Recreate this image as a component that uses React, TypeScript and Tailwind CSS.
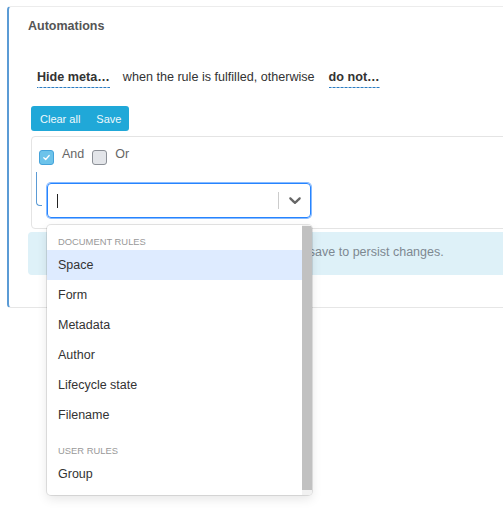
import React from 'react'

const documentRules = ['Space', 'Form', 'Metadata', 'Author', 'Lifecycle state', 'Filename']
const userRules = ['Group']

function Chevron() {
  return (
    <svg viewBox="0 0 20 20" width="20" height="20" className="fill-[#666]">
      <path d="M4.516 7.548c0.436-0.446 1.043-0.481 1.576 0l3.908 3.747 3.908-3.747c0.533-0.481 1.141-0.446 1.574 0 0.436 0.445 0.408 1.197 0 1.615-0.406 0.418-4.695 4.502-4.695 4.502-0.217 0.223-0.502 0.335-0.787 0.335s-0.57-0.112-0.789-0.335c0 0-4.287-4.084-4.695-4.502s-0.436-1.17 0-1.615z" />
    </svg>
  )
}

function Checkbox({ checked }: { checked: boolean }) {
  if (checked) {
    return (
      <span className="mt-[4px] flex h-[15px] w-[15px] shrink-0 items-center justify-center rounded-[3px] border border-[#45a3da] bg-[#6cc3ea]">
        <svg viewBox="0 0 10 10" width="9" height="9">
          <path d="M2 5.2 L4.1 7.2 L8 2.8" fill="none" stroke="#fff" strokeWidth="1.4" strokeLinecap="round" strokeLinejoin="round" />
        </svg>
      </span>
    )
  }
  return <span className="mt-[4px] h-[15px] w-[15px] shrink-0 rounded-[3px] border border-[#8c9097] bg-[#e3e5e9]" />
}

// underline used by the inline editable selects
const dashed =
  'inline-block pb-[3px] font-bold text-[#333] bg-[linear-gradient(to_right,#2b7cc2_3px,transparent_3px)] bg-[length:4px_1px] bg-repeat-x bg-bottom'

export default function App() {
  return (
    <div className="h-[513px] w-[503px] overflow-hidden bg-white pl-[7px] pt-[6px] font-['Liberation_Sans',Arial,sans-serif] text-[12.5px] leading-4 text-[#333]">
      <div className="w-[560px] rounded-[4px] border-t border-b border-l-2 border-t-[#ececec] border-b-[#e6e6e6] border-l-[#5b9bd5] pb-[32px] pl-[19px] pt-[11px]">
        <h2 className="font-bold text-[#555]">Automations</h2>

        {/* rule sentence */}
        <div className="mt-[35px] flex items-start pl-[9px] text-[12.6px]">
          <span className={dashed}>Hide meta…</span>
          <span className="ml-[13px]">when the rule is fulfilled, otherwise</span>
          <span className={`ml-[14px] ${dashed}`}>do not…</span>
        </div>

        <div className="ml-[3px] mt-[18px] flex h-[25px] w-fit items-center rounded-[3px] bg-[#20a8d8] text-[11px] text-[#eef8fc]">
          <button className="pl-[9px] pr-[8px]">Clear all</button>
          <button className="pl-[8px] pr-[8px]">Save</button>
        </div>

        {/* rule group */}
        <div className="ml-[3px] mt-[5px] rounded-[4px] border border-[#e4e4e4] pb-[10px] pt-[9px]">
          <div className="flex items-start pl-[7px]">
            <Checkbox checked />
            <span className="ml-[8px] text-[#666]">And</span>
            <span className="ml-[8px]" />
            <Checkbox checked={false} />
            <span className="ml-[8px] text-[#666]">Or</span>
          </div>

          <div className="mt-[7px] flex items-start pl-[4px]">
            <div className="h-[34px] w-[6px] rounded-bl-[4px] border-b border-l border-[#5b9bd5]" />
            <div className="relative ml-[5px] mt-[11px] flex h-[35px] w-[264px] rounded-[4px] border border-[#2684ff] shadow-[0_0_0_1px_rgba(38,132,255,0.55)]">
              <div className="flex flex-1 items-center pl-[9px]">
                <span className="h-[14px] w-px bg-[#222]" />
              </div>
              <span className="my-[8px] w-px bg-[#ccc]" />
              <div className="flex w-[31px] items-center justify-center pb-[2px]">
                <Chevron />
              </div>

              {/* open menu */}
              <div className="absolute left-[-1px] top-[41px] z-10 h-[270px] w-[265px] overflow-hidden rounded-[4px] bg-white shadow-[0_0_0_1px_rgba(0,0,0,0.1),0_4px_11px_rgba(0,0,0,0.1)]">
                <div className="pt-[4px]">
                  <div className="pb-[8px] pt-[8px]">
                    <div className="mb-[3px] px-[11px] text-[9.4px] uppercase leading-[10px] text-[#999]">Document rules</div>
                    {documentRules.map((r, i) => (
                      <div key={r} className={`flex h-[30px] items-center px-[11px] ${i === 0 ? 'bg-[#deebff]' : ''}`}>
                        {r}
                      </div>
                    ))}
                  </div>
                  <div className="pb-[8px] pt-[8px]">
                    <div className="mb-[3px] px-[11px] text-[9.4px] uppercase leading-[10px] text-[#999]">User rules</div>
                    {userRules.map(r => (
                      <div key={r} className="flex h-[30px] items-center px-[11px]">
                        {r}
                      </div>
                    ))}
                  </div>
                </div>
                <div className="absolute bottom-0 right-0 top-0 w-[10px] bg-[#f1f1f1]">
                  <div className="mt-[1px] h-[264px] bg-[#c1c1c1]" />
                </div>
              </div>
            </div>
          </div>
        </div>

        <div className="mt-[3px] h-[43px] rounded-[4px] bg-[#def1f8] pl-[27px] pt-[12px] text-[#7d8891]">
          You have unsaved rule changes. Please click save to persist changes.
        </div>
      </div>
    </div>
  )
}
